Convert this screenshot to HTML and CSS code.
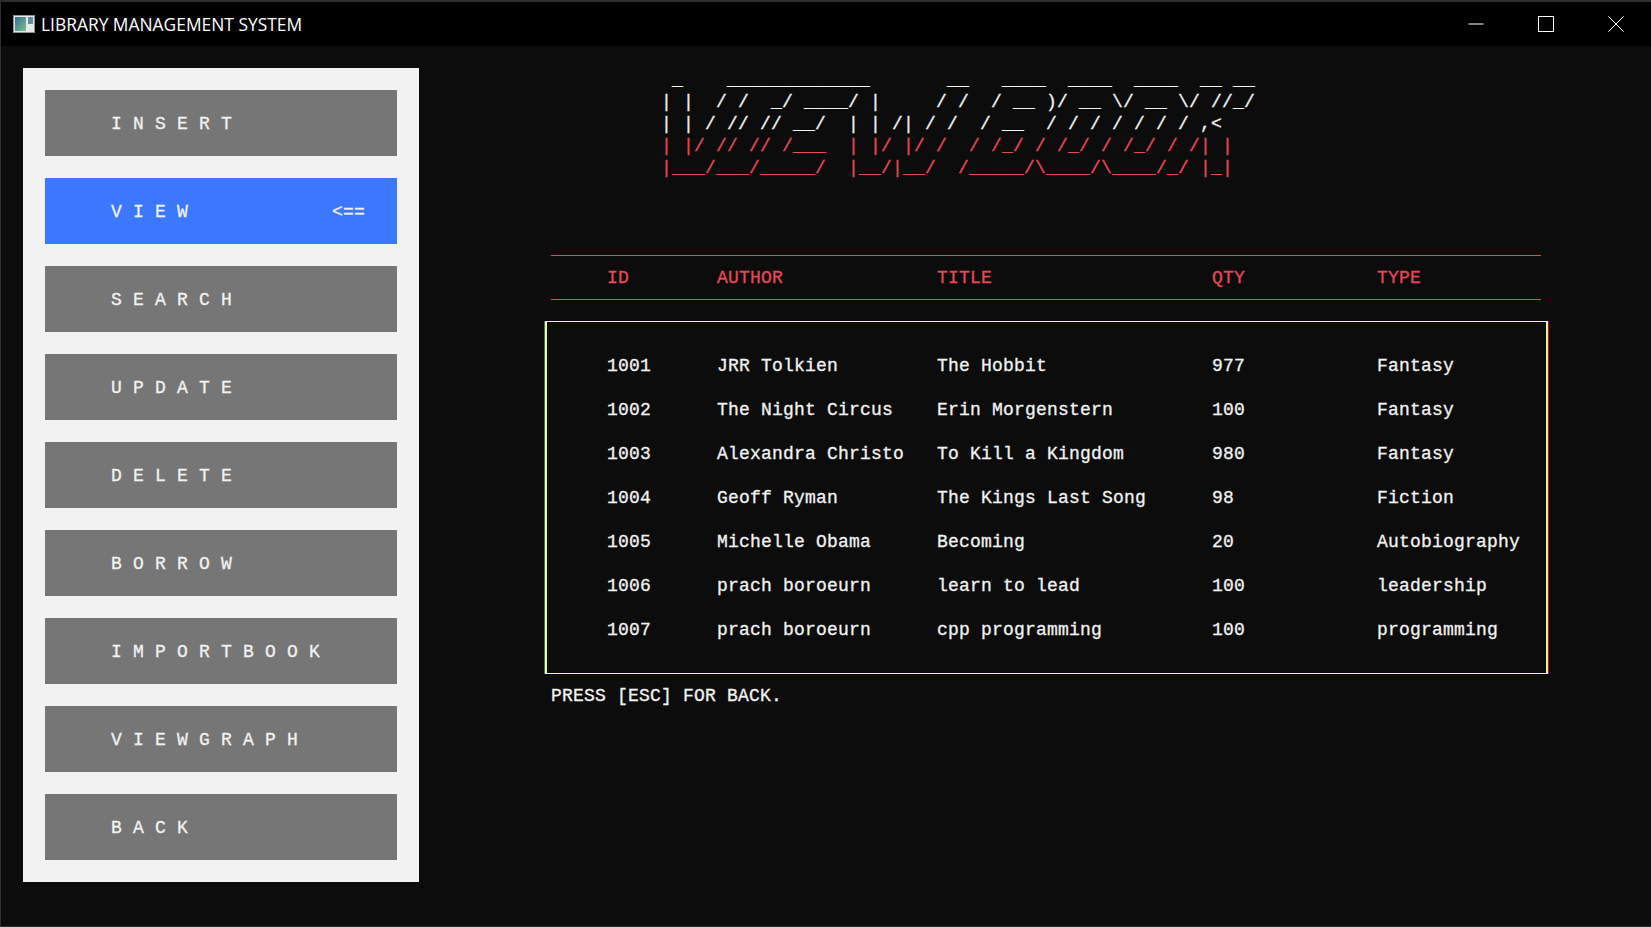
FILE: index.html
```html
<!DOCTYPE html>
<html lang="en">
<head>
    <meta charset="UTF-8">
    <title>LIBRARY MANAGEMENT SYSTEM</title>
    <link rel="stylesheet" href="styles.css">
</head>
<body>
    <div class="window">
        <header class="titlebar">
            <svg class="app-icon" width="22" height="18" viewBox="0 0 22 18">
                <defs>
                    <linearGradient id="screen" x1="0" y1="0" x2="1" y2="1">
                        <stop offset="0" stop-color="#2f6f94"/>
                        <stop offset="1" stop-color="#7fbf8a"/>
                    </linearGradient>
                </defs>
                <rect x="0.5" y="0.5" width="21" height="17" fill="#e8e8e8" stroke="#8a8f94"/>
                <rect x="2" y="2" width="11" height="14" fill="url(#screen)"/>
                <rect x="15" y="2" width="5" height="7" fill="#5f8f9c"/>
            </svg>
            <span class="app-title">LIBRARY MANAGEMENT SYSTEM</span>
            <div class="window-controls">
                <button class="win-btn">
                    <svg width="16" height="16" viewBox="0 0 16 16"><path d="M0.5 8h15" stroke="#fff" fill="none"/></svg>
                </button>
                <button class="win-btn">
                    <svg width="16" height="16" viewBox="0 0 16 16"><rect x="0.5" y="0.5" width="15" height="15" stroke="#fff" fill="none"/></svg>
                </button>
                <button class="win-btn">
                    <svg width="16" height="16" viewBox="0 0 16 16"><path d="M0.5 0.5l15 15M15.5 0.5l-15 15" stroke="#fff" fill="none"/></svg>
                </button>
            </div>
        </header>

        <main class="console">
            <nav class="menu">
                <div class="menu-item"><span>I N S E R T</span></div>
                <div class="menu-item active"><span>V I E W</span><span class="arrow">&lt;==</span></div>
                <div class="menu-item"><span>S E A R C H</span></div>
                <div class="menu-item"><span>U P D A T E</span></div>
                <div class="menu-item"><span>D E L E T E</span></div>
                <div class="menu-item"><span>B O R R O W</span></div>
                <div class="menu-item"><span>I M P O R T B O O K</span></div>
                <div class="menu-item"><span>V I E W G R A P H</span></div>
                <div class="menu-item"><span>B A C K</span></div>
            </nav>

            <section class="content">
                <div class="banner">
                    <pre class="banner-top"> _    _____________       __   ____  ____  ____  __ __
| |  / /  _/ ____/ |     / /  / __ )/ __ \/ __ \/ //_/
| | / // // __/  | | /| / /  / __  / / / / / / / ,&lt;</pre>
                    <pre class="banner-bottom">| |/ // // /___  | |/ |/ /  / /_/ / /_/ / /_/ / /| |
|___/___/_____/  |__/|__/  /_____/\____/\____/_/ |_|</pre>
                </div>

                <div class="book-head book-row">
                    <span>ID</span><span>AUTHOR</span><span>TITLE</span><span>QTY</span><span>TYPE</span>
                </div>

                <div class="book-box">
                    <div class="book-row"><span>1001</span><span>JRR Tolkien</span><span>The Hobbit</span><span>977</span><span>Fantasy</span></div>
                    <div class="book-row"><span>1002</span><span>The Night Circus</span><span>Erin Morgenstern</span><span>100</span><span>Fantasy</span></div>
                    <div class="book-row"><span>1003</span><span>Alexandra Christo</span><span>To Kill a Kingdom</span><span>980</span><span>Fantasy</span></div>
                    <div class="book-row"><span>1004</span><span>Geoff Ryman</span><span>The Kings Last Song</span><span>98</span><span>Fiction</span></div>
                    <div class="book-row"><span>1005</span><span>Michelle Obama</span><span>Becoming</span><span>20</span><span>Autobiography</span></div>
                    <div class="book-row"><span>1006</span><span>prach boroeurn</span><span>learn to lead</span><span>100</span><span>leadership</span></div>
                    <div class="book-row"><span>1007</span><span>prach boroeurn</span><span>cpp programming</span><span>100</span><span>programming</span></div>
                </div>

                <p class="hint">PRESS [ESC] FOR BACK.</p>
            </section>
        </main>
    </div>
</body>
</html>
```

FILE: styles.css
```css
html, body {
    margin: 0;
    padding: 0;
    height: 100%;
    overflow: hidden;
    background-color: #0c0c0c;
}

.window {
    height: 100vh;
    box-sizing: border-box;
    display: flex;
    flex-direction: column;
    border-top: 2px solid #2e2e2e;
    border-left: 1px solid #2e2e2e;
    border-bottom: 1px solid #2e2e2e;
    font-family: "Liberation Mono", monospace;
    font-size: 18px;
    letter-spacing: 0.2px;
    line-height: 22px;
    color: #f2f2f2;
    -webkit-text-stroke: 0.3px;
}

.titlebar {
    height: 44px;
    flex: none;
    display: flex;
    align-items: center;
    background-color: #000;
    padding-left: 12px;
}

.app-icon {
    margin-right: 6px;
}

.app-title {
    font-family: "Open Sans", sans-serif;
    font-size: 17.4px;
    letter-spacing: 0;
    color: #fff;
    -webkit-text-stroke: 0;
}

.window-controls {
    margin-left: auto;
    display: flex;
}

.win-btn {
    width: 70px;
    height: 44px;
    padding: 0;
    display: flex;
    align-items: center;
    justify-content: center;
    background: none;
    border: none;
}

.console {
    flex: 1;
    display: flex;
    align-items: flex-start;
    padding: 22px 0 0 22px;
}

.menu {
    width: 352px;
    padding: 22px;
    display: flex;
    flex-direction: column;
    gap: 22px;
    background-color: #f2f2f2;
}

.menu-item {
    height: 66px;
    box-sizing: border-box;
    display: flex;
    align-items: center;
    justify-content: space-between;
    padding: 2px 32px 0 66px;
    background-color: #767676;
}

.menu-item.active {
    background-color: #3b78ff;
}

.content {
    margin-left: 126px;
    width: 1003px;
}

.banner {
    margin: 0 0 76px 116px;
    padding-top: 1px;
}

.banner pre {
    margin: 0;
    font: inherit;
}

.banner-bottom {
    color: #e74856;
}

.book-row {
    display: grid;
    grid-template-columns: 110px 220px 275px 165px auto;
    padding-left: 60px;
}

.book-head {
    width: 990px;
    box-sizing: border-box;
    margin-left: 6px;
    padding-left: 56px;
    height: 45px;
    align-items: center;
    border-top: 1px solid #e74856;
    border-bottom: 1px solid #e74856;
    color: #e74856;
}

.book-box {
    margin-top: 21px;
    padding: 33px 0 32px;
    display: flex;
    flex-direction: column;
    gap: 22px;
    border: 1px solid #f9f1a5;
    border-left-width: 2px;
    border-right-width: 2px;
    box-shadow: -1px 0 0 #1f7a6e, 1px 0 0 #a3121f;
}

.hint {
    margin: 11px 0 0 6px;
}
```
